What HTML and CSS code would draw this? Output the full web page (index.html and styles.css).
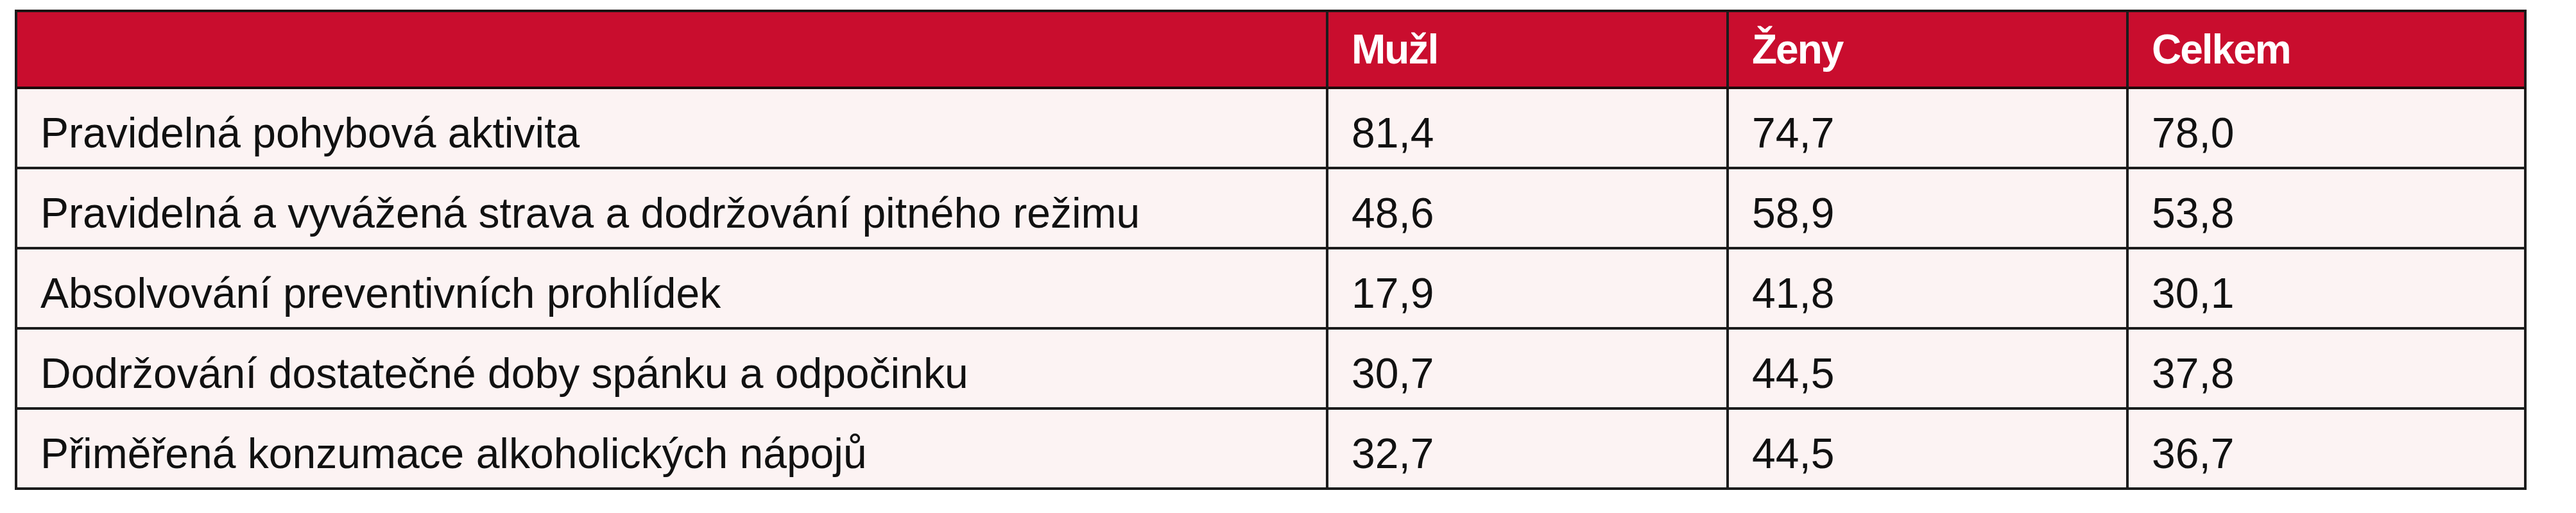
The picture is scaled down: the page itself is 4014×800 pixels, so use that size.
FILE: index.html
```html
<!DOCTYPE html>
<html lang="cs">
<head>
<meta charset="utf-8">
<title>Tabulka</title>
<link rel="stylesheet" href="styles.css">
</head>
<body>
<table class="data">
  <colgroup>
    <col class="c-label">
    <col class="c-num">
    <col class="c-num2">
    <col class="c-num3">
  </colgroup>
  <thead>
    <tr>
      <th></th>
      <th>Mužl</th>
      <th>Ženy</th>
      <th>Celkem</th>
    </tr>
  </thead>
  <tbody>
    <tr><td>Pravidelná pohybová aktivita</td><td>81,4</td><td>74,7</td><td>78,0</td></tr>
    <tr><td>Pravidelná a vyvážená strava a dodržování pitného režimu</td><td>48,6</td><td>58,9</td><td>53,8</td></tr>
    <tr><td>Absolvování preventivních prohlídek</td><td>17,9</td><td>41,8</td><td>30,1</td></tr>
    <tr><td>Dodržování dostatečné doby spánku a odpočinku</td><td>30,7</td><td>44,5</td><td>37,8</td></tr>
    <tr><td>Přiměřená konzumace alkoholických nápojů</td><td>32,7</td><td>44,5</td><td>36,7</td></tr>
  </tbody>
</table>
</body>
</html>
```
FILE: styles.css
```css
html, body {
  margin: 0;
  padding: 0;
  background: #ffffff;
}

body {
  padding: 15px 0 0 23px;
  font-family: "Liberation Sans", Arial, sans-serif;
  color: #111111;
}

.data {
  box-sizing: border-box;
  width: 3914px;
  table-layout: fixed;
  border-collapse: separate;
  border-spacing: 0;
  border-top: 4px solid #1c1414;
  border-left: 4px solid #1c1c1c;
}

.c-label { width: 2043px; }
.c-num { width: 624px; }
.c-num2 { width: 623px; }
.c-num3 { width: 620px; }

.data th,
.data td {
  box-sizing: border-box;
  border-right: 4px solid #1c1c1c;
  border-bottom: 4px solid #1c1c1c;
  text-align: left;
  vertical-align: middle;
  white-space: nowrap;
  padding: 0 0 0 36px;
}

.data th {
  height: 120px;
  background: #c90d2e;
  color: #ffffff;
  font-weight: 700;
  font-size: 64px;
  letter-spacing: -2px;
  border-bottom-color: #1c0a0a;
}

.data td {
  height: 125px;
  background: #fcf3f3;
  font-size: 66px;
  font-weight: 400;
  padding-top: 14px;
}
```
